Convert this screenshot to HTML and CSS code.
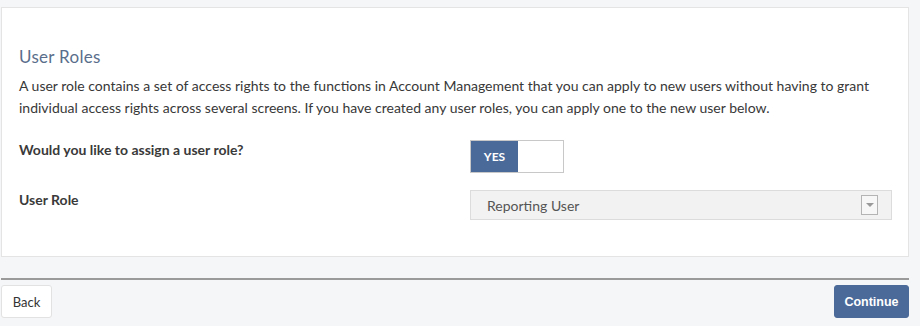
FILE: index.html
```html
<!DOCTYPE html>
<html lang="en">
  <head>
    <meta charset="UTF-8">
    <title>User Roles</title>
    <link rel="stylesheet" href="styles.css">
  </head>
  <body>
    <div class="wrap">
      <div class="panel">
        <h2 class="title">User Roles</h2>
        <p class="intro">
          A user role contains a set of access rights to the functions in Account Management that you can apply to new users without having to grant
          individual access rights across several screens. If you have created any user roles, you can apply one to the new user below.
        </p>

        <div class="row">
          <div class="label">Would you like to assign a user role?</div>
          <div class="control">
            <div class="toggle">
              <span class="toggle-on">YES</span>
              <span class="toggle-off"></span>
            </div>
          </div>
        </div>

        <div class="row">
          <div class="label">User Role</div>
          <div class="control">
            <div class="select">
              <span class="select-value">Reporting User</span>
              <span class="select-arrow"></span>
            </div>
          </div>
        </div>
      </div>

      <div class="footer">
        <button class="btn">Back</button>
        <button class="btn primary">Continue</button>
      </div>
    </div>
  </body>
</html>
```

FILE: styles.css
```css
* {
  margin: 0;
  padding: 0;
  box-sizing: border-box;
}

body {
  background: #f5f6f8;
  font-family: Lato, "Open Sans", sans-serif;
  color: #383838;
}

.wrap {
  width: 909px;
  padding-top: 7px;
}

.panel {
  margin-left: 1px;
  background: #fff;
  border: 1px solid #e4e4e4;
  padding: 38px 16px 36px 17px;
  height: 250px;
}

.title {
  font-size: 17px;
  font-weight: 400;
  letter-spacing: 0.3px;
  color: #5a6e8c;
  line-height: 22px;
}

.intro {
  font-size: 14px;
  line-height: 22px;
  margin-top: 7px;
}

.row {
  display: flex;
  align-items: flex-start;
}

.row + .row {
  margin-top: 17px;
}

.intro + .row {
  margin-top: 21px;
}

.label {
  width: 451px;
  font-size: 14px;
  line-height: 20px;
  font-weight: 700;
  color: #3a3a3a;
}

.control {
  flex: 1;
}

.toggle {
  display: flex;
  width: 94px;
  height: 33px;
  border: 1px solid #c8c8c8;
}

.toggle-on {
  width: 47px;
  background: #4a6a99;
  color: #fff;
  font-size: 12px;
  font-weight: 700;
  display: flex;
  align-items: center;
  justify-content: center;
}

.toggle-off {
  flex: 1;
  background: #fff;
}

.select {
  display: flex;
  align-items: center;
  justify-content: space-between;
  height: 30px;
  background: #f2f2f2;
  border: 1px solid #dcdcdc;
  padding: 0 13px 0 16px;
  font-size: 14px;
  color: #555;
}

.select-arrow {
  width: 17px;
  height: 20px;
  border: 1px solid #b4b4b4;
  background: #f7f7f7;
  display: flex;
  align-items: center;
  justify-content: center;
}

.select-arrow::after {
  content: "";
  border-left: 4px solid transparent;
  border-right: 4px solid transparent;
  border-top: 4px solid #999;
}

.footer {
  margin-top: 21px;
  margin-left: 1px;
  border-top: 2px solid #9a9a9a;
  padding-top: 5px;
  display: flex;
  justify-content: space-between;
}

.btn {
  height: 33px;
  width: 51px;
  background: #fff;
  border: 1px solid #e2e2e2;
  border-radius: 3px;
  font-family: Lato, sans-serif;
  font-size: 13px;
  color: #333;
}

.btn.primary {
  width: 75px;
  background: #4b6a99;
  border-color: #4b6a99;
  color: #fff;
  font-family: "Liberation Sans", Arial, sans-serif;
  font-size: 12.5px;
  font-weight: 700;
}
```
